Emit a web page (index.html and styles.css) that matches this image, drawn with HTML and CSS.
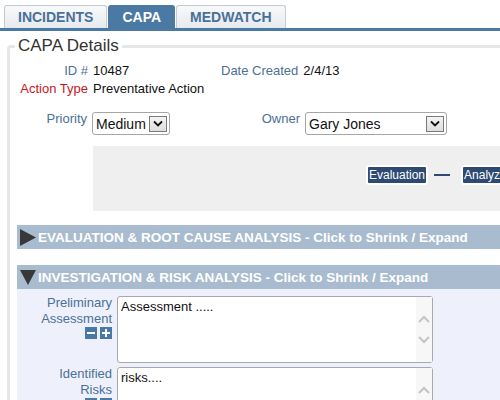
FILE: index.html
```html
<!DOCTYPE html>
<html>
<head>
<meta charset="utf-8">
<link rel="stylesheet" href="styles.css">
</head>
<body>
<div class="tabs">
  <div class="tab">INCIDENTS</div>
  <div class="tab active">CAPA</div>
  <div class="tab">MEDWATCH</div>
</div>
<fieldset class="details">
  <legend>CAPA Details</legend>
  <div class="row-id">
    <span class="lbl right">ID #</span><span class="val">10487</span>
    <span class="lbl">Date Created</span><span class="val">2/4/13</span>
  </div>
  <div class="row-id">
    <span class="lbl red right">Action Type</span><span class="val">Preventative Action</span>
  </div>
  <div class="row-select">
    <span class="lbl right sel-lbl">Priority</span>
    <div class="select"><span class="sel-text">Medium</span><span class="sel-btn"><svg width="10" height="7" viewBox="0 0 10 7"><polyline points="1,1.5 5,5.5 9,1.5" fill="none" stroke="#111" stroke-width="1.8"/></svg></span></div>
    <span class="lbl right sel-lbl">Owner</span>
    <div class="select"><span class="sel-text">Gary Jones</span><span class="sel-btn"><svg width="10" height="7" viewBox="0 0 10 7"><polyline points="1,1.5 5,5.5 9,1.5" fill="none" stroke="#111" stroke-width="1.8"/></svg></span></div>
  </div>
  <div class="workflow">
    <span class="step">Evaluation</span><span class="connector"></span><span class="step">Analyze</span>
  </div>
  <div class="section">
    <div class="sec-head"><svg class="tri" width="16" height="17" viewBox="0 0 16 17"><polygon points="0,0 16,8.5 0,17" fill="#383838"/></svg><span>EVALUATION &amp; ROOT CAUSE ANALYSIS - Click to Shrink / Expand</span></div>
  </div>
  <div class="section open">
    <div class="sec-head"><svg class="tri" width="16" height="17" viewBox="0 0 16 17"><polygon points="0,1 16,1 8,16" fill="#383838"/></svg><span>INVESTIGATION &amp; RISK ANALYSIS - Click to Shrink / Expand</span></div>
    <div class="sec-body">
      <div class="field-lbl">
        <div>Preliminary<br>Assessment</div>
        <div class="pm">
          <svg width="12" height="12" viewBox="0 0 12 12"><rect width="12" height="12" fill="#4a79a6"/><rect x="2" y="5" width="8" height="2" fill="#fff"/></svg>
          <svg width="12" height="12" viewBox="0 0 12 12"><rect width="12" height="12" fill="#4a79a6"/><rect x="2" y="5" width="8" height="2" fill="#fff"/><rect x="5" y="2" width="2" height="8" fill="#fff"/></svg>
        </div>
      </div>
      <div class="ta">
        <div class="ta-text">Assessment .....</div>
        <div class="ta-scroll">
          <svg width="12" height="8" viewBox="0 0 12 8"><polyline points="1,7 6,2 11,7" fill="none" stroke="#c4c4c4" stroke-width="2"/></svg>
          <svg width="12" height="8" viewBox="0 0 12 8"><polyline points="1,1 6,6 11,1" fill="none" stroke="#c4c4c4" stroke-width="2"/></svg>
        </div>
      </div>
      <div class="field-lbl">
        <div>Identified<br>Risks</div>
        <div class="pm">
          <svg width="12" height="12" viewBox="0 0 12 12"><rect width="12" height="12" fill="#4a79a6"/><rect x="2" y="5" width="8" height="2" fill="#fff"/></svg>
          <svg width="12" height="12" viewBox="0 0 12 12"><rect width="12" height="12" fill="#4a79a6"/><rect x="2" y="5" width="8" height="2" fill="#fff"/><rect x="5" y="2" width="2" height="8" fill="#fff"/></svg>
        </div>
      </div>
      <div class="ta">
        <div class="ta-text">risks....</div>
        <div class="ta-scroll">
          <svg width="12" height="8" viewBox="0 0 12 8"><polyline points="1,7 6,2 11,7" fill="none" stroke="#c4c4c4" stroke-width="2"/></svg>
          <svg width="12" height="8" viewBox="0 0 12 8"><polyline points="1,1 6,6 11,1" fill="none" stroke="#c4c4c4" stroke-width="2"/></svg>
        </div>
      </div>
    </div>
  </div>
</fieldset>
</body>
</html>
```
FILE: styles.css
```css
html, body {
  margin: 0;
  padding: 0;
  width: 500px;
  height: 400px;
  overflow: hidden;
  background: #fff;
}
body {
  font-family: "Liberation Sans", Arial, sans-serif;
  font-size: 13px;
  color: #111;
}
.tabs {
  display: flex;
  gap: 1px;
  padding: 5px 0 0 4px;
  border-bottom: 3px solid #4a7aa3;
  width: 700px;
}
.tab {
  height: 22px;
  line-height: 23px;
  padding: 0 13px;
  border: 1px solid #c3cbd3;
  border-bottom: none;
  border-radius: 3px 3px 0 0;
  background: linear-gradient(#f8f9fa, #e6eaee);
  color: #4a7099;
  font-weight: bold;
  font-size: 14px;
}
.tab.active {
  background: #4a7aa3;
  border-color: #4a7aa3;
  color: #fff;
}
.details {
  margin: 5px 0 0 7px;
  padding: 6px 0 0 0;
  border: 3px solid #e7e7e7;
  border-right: none;
  border-bottom: none;
  border-radius: 4px 0 0 0;
  width: 700px;
  min-width: 0;
}
.details legend {
  margin-left: 5px;
  padding: 0 3px;
  font-size: 17px;
  line-height: 20px;
  color: #333;
}
.row-id {
  display: grid;
  grid-template-columns: 78px 123px auto auto;
  justify-content: start;
  column-gap: 5px;
  line-height: 18px;
}
.lbl { color: #4b7096; }
.lbl.red { color: #c8161d; }
.right { text-align: right; }
.row-select {
  display: grid;
  grid-template-columns: 77px 78px 125px 142px;
  column-gap: 5px;
  margin-top: 14px;
  align-items: start;
}
.sel-lbl { line-height: 13px; }
.select {
  height: 23px;
  box-sizing: border-box;
  border: 1px solid #a6a6a6;
  border-radius: 3px;
  background: #fff;
  display: flex;
  align-items: center;
  justify-content: space-between;
  padding: 0 2px 0 3px;
  font-size: 14px;
}
.sel-text { line-height: 18px; }
.sel-btn {
  width: 18px;
  height: 16px;
  box-sizing: border-box;
  border: 1px solid #7a7a7a;
  background: linear-gradient(#f4f4f4, #dedede);
  display: flex;
  align-items: center;
  justify-content: center;
}
.workflow {
  margin: 11px 0 0 83px;
  height: 65px;
  box-sizing: border-box;
  background: #efefef;
  display: flex;
  align-items: flex-start;
  padding: 19px 0 0 273px;
}
.step {
  background: #2e4a73;
  color: #fff;
  border: 2px solid #fff;
  border-radius: 3px;
  padding: 0 1px;
  font-size: 12px;
  line-height: 16px;
  white-space: nowrap;
}
.connector {
  width: 16px;
  height: 2px;
  background: #2e4a73;
  margin: 9px 11px 0 6px;
}
.section {
  margin: 14px 0 0 7px;
}
.section.open { margin-top: 16px; }
.sec-head {
  height: 24px;
  background: #a9bccf;
  display: flex;
  align-items: center;
  padding-left: 3px;
  color: #fff;
  font-weight: bold;
  font-size: 13.5px;
  white-space: nowrap;
}
.sec-head span { margin-left: 2px; }
.sec-body {
  background: #eef0fb;
  padding: 7px 0 20px 0;
  display: grid;
  grid-template-columns: 95px 316px;
  column-gap: 5px;
  row-gap: 4px;
  align-items: start;
}
.field-lbl {
  text-align: right;
  color: #4b7096;
  line-height: 16px;
  margin-top: -1px;
}
.pm {
  display: flex;
  justify-content: flex-end;
  gap: 3px;
}
.pm svg { display: block; }
.ta {
  height: 67px;
  box-sizing: border-box;
  border: 1px solid #a9a9a9;
  border-radius: 3px;
  background: #fff;
  display: flex;
}
.ta-text {
  flex: 1;
  padding: 2px 3px;
  line-height: 15px;
}
.ta-scroll {
  width: 16px;
  background: #f7f7f7;
  display: flex;
  flex-direction: column;
  align-items: center;
  padding-top: 18px;
  gap: 13px;
}
.ta-scroll svg { display: block; }
```
